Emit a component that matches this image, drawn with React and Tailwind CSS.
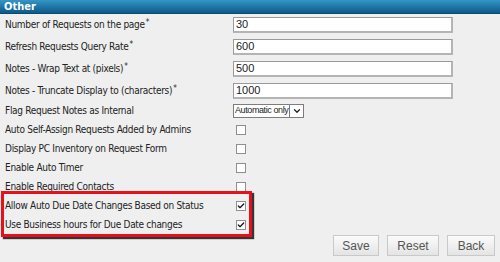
import { Check, ChevronDown } from "lucide-react";

const font = { fontFamily: '"DejaVu Sans Condensed", "DejaVu Sans", sans-serif' };

function Label({ text, required }) {
  return (
    <div className="w-[233px] pl-[5px] text-[10px] tracking-[-0.3px] leading-none text-[#222] whitespace-nowrap">
      {text}
      {required && <sup className="text-[8px] relative -top-[3px] ml-[1px]">*</sup>}
    </div>
  );
}

function TextRow({ label, value, h = "h-[22px]" }) {
  return (
    <div className={`flex items-center ${h}`}>
      <Label text={label} required />
      <div className="w-[220px] h-[16px] bg-white border border-[#9a9a9a] border-b-2 border-r-2 border-b-[#b4b4b4] border-r-[#b4b4b4] flex items-center pl-[2px] text-[11px] text-[#222] font-['Liberation_Sans',sans-serif]">
        {value}
      </div>
    </div>
  );
}

function Box({ checked }) {
  return (
    <div className="w-[10px] h-[10px] ml-[3px] bg-white border border-[#8f8f8f] flex items-center justify-center">
      {checked && <Check className="w-[8px] h-[8px] text-[#1a1a1a]" strokeWidth={4} />}
    </div>
  );
}

function CheckRow({ label, checked }) {
  return (
    <div className="flex items-center h-[19px]">
      <Label text={label} />
      <Box checked={checked} />
    </div>
  );
}

function Button({ children, w }) {
  return (
    <button className={`${w} h-[21px] border border-[#c9c9c9] bg-gradient-to-b from-[#fbfbfb] to-[#e4e4e4] text-[12px] text-[#555] font-['Liberation_Sans',sans-serif]`}>
      {children}
    </button>
  );
}

export default function App() {
  return (
    <div className="w-[500px] h-[262px] bg-[#efefef] overflow-hidden" style={font}>
      {/* Section header */}
      <div className="h-[14px] bg-gradient-to-b from-[#3596c6] to-[#0b5a88] border-b border-[#0a4a70] flex items-center pl-[4px]">
        <span className="text-white font-bold text-[11px] leading-none">Other</span>
      </div>

      <TextRow label="Number of Requests on the page" value="30" />
      <TextRow label="Refresh Requests Query Rate" value="600" />
      <TextRow label="Notes - Wrap Text at (pixels)" value="500" />
      <TextRow label="Notes - Truncate Display to (characters)" value="1000" h="h-[21px]" />

      <div className="flex items-center h-[19px]">
        <Label text="Flag Request Notes as Internal" />
        <div className="h-[14px] w-[71px] flex bg-white border border-[#7d7d7d] text-[9px] tracking-[-0.4px] text-[#222] font-['Liberation_Sans',sans-serif]">
          <span className="flex-1 flex items-center pl-[1px] leading-none whitespace-nowrap">Automatic only</span>
          <span className="w-[14px] shrink-0 border-l border-[#7d7d7d] flex items-center justify-center">
            <ChevronDown className="w-[10px] h-[10px] text-[#222]" strokeWidth={3} />
          </span>
        </div>
      </div>

      <CheckRow label="Auto Self-Assign Requests Added by Admins" />
      <CheckRow label="Display PC Inventory on Request Form" />
      <CheckRow label="Enable Auto Timer" />
      <CheckRow label="Enable Required Contacts" />

      <div className="relative">
        <CheckRow label="Allow Auto Due Date Changes Based on Status" checked />
        <CheckRow label="Use Business hours for Due Date changes" checked />
        <div className="absolute left-[1px] top-[-5px] w-[251px] h-[46px] border-[3px] border-[#e8101a] shadow-[2px_2px_1px_rgba(20,20,20,0.85)] pointer-events-none" />
      </div>

      <div className="flex justify-end gap-[8px] pr-[5px] pt-[1px]">
        <Button w="w-[46px]">Save</Button>
        <Button w="w-[52px]">Reset</Button>
        <Button w="w-[48px]">Back</Button>
      </div>
    </div>
  );
}
